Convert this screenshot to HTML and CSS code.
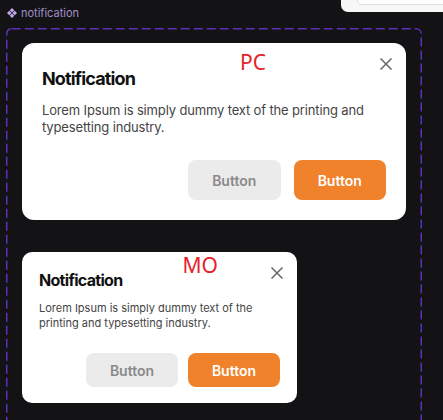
FILE: index.html
```html
<!DOCTYPE html>
<html lang="en">
<head>
<meta charset="utf-8">
<title>notification</title>
<link rel="stylesheet" href="styles.css">
</head>
<body>
<div class="side-panel"><div class="side-panel-inner"></div></div>
<div class="page">
  <div class="layer-label">
    <svg class="comp-icon" width="10" height="10" viewBox="0 0 10 10" aria-hidden="true">
      <path d="M5 0 L7.3 2.3 L5 4.6 L2.7 2.3 Z"/>
      <path d="M2.3 2.7 L4.6 5 L2.3 7.3 L0 5 Z"/>
      <path d="M7.7 2.7 L10 5 L7.7 7.3 L5.4 5 Z"/>
      <path d="M5 5.4 L7.3 7.7 L5 10 L2.7 7.7 Z"/>
    </svg>
    <span>notification</span>
  </div>
  <div class="frame">
    <svg class="frame-border" width="416" height="392" viewBox="0 0 416 392" aria-hidden="true">
      <rect x="0.75" y="0.75" width="414.5" height="440" rx="5" ry="5"/>
    </svg>

    <div class="card card-pc">
      <span class="tag tag-pc">PC</span>
      <button class="close close-pc" aria-label="Close">
        <svg width="12" height="12" viewBox="0 0 12 12"><path d="M0.5 0.5 L11.5 11.5 M11.5 0.5 L0.5 11.5"/></svg>
      </button>
      <h2 class="title">Notification</h2>
      <p class="text">Lorem Ipsum is simply dummy text of the printing and typesetting industry.</p>
      <div class="actions">
        <button class="btn btn-secondary">Button</button>
        <button class="btn btn-primary">Button</button>
      </div>
    </div>

    <div class="card card-mo">
      <span class="tag tag-mo">MO</span>
      <button class="close close-mo" aria-label="Close">
        <svg width="12" height="12" viewBox="0 0 12 12"><path d="M0.5 0.5 L11.5 11.5 M11.5 0.5 L0.5 11.5"/></svg>
      </button>
      <h2 class="title">Notification</h2>
      <p class="text">Lorem Ipsum is simply dummy text of the printing and typesetting industry.</p>
      <div class="actions">
        <button class="btn btn-secondary">Button</button>
        <button class="btn btn-primary">Button</button>
      </div>
    </div>
  </div>
</div>
</body>
</html>
```

FILE: styles.css
```css
* { box-sizing: border-box; }

html, body {
  margin: 0;
  padding: 0;
  width: 443px;
  height: 420px;
  overflow: hidden;
  background: #131315;
  font-family: Inter, "Noto Sans", sans-serif;
}

.side-panel {
  position: absolute;
  top: 0;
  right: 0;
  width: 102px;
  height: 12px;
  background: #f7f7f7;
  border-bottom-left-radius: 7px;
  overflow: hidden;
}

.side-panel-inner {
  position: absolute;
  top: -10px;
  left: 16px;
  right: -8px;
  height: 15px;
  background: #fff;
  border: 1px solid #dedede;
  border-radius: 5px;
}

.page {
  padding: 4px 0 0 6px;
}

.layer-label {
  display: flex;
  align-items: center;
  gap: 4px;
  height: 18px;
  padding-left: 1px;
  font-size: 11px;
  color: #a38dcb;
}

.comp-icon {
  display: block;
  fill: #c3a6ee;
}

.frame {
  position: relative;
  margin-top: 6px;
  width: 416px;
  height: 392px;
  padding: 15px 16px 0;
  display: flex;
  flex-direction: column;
  align-items: flex-start;
  gap: 32px;
  overflow: hidden;
}

.frame-border {
  position: absolute;
  top: 0;
  left: 0;
  pointer-events: none;
}

.frame-border rect {
  fill: none;
  stroke: #5f2eba;
  stroke-width: 1.5;
  stroke-dasharray: 9 4;
}

.card {
  position: relative;
  flex: none;
  background: #fff;
  display: flex;
  flex-direction: column;
}

.card-pc {
  width: 384px;
  padding: 25px 20px 20px;
  border-radius: 12px;
}

.card-mo {
  width: 275px;
  padding: 18px 17px 16px;
  border-radius: 10px;
}

.tag {
  position: absolute;
  font-family: "Noto Sans", "Noto Sans CJK KR", sans-serif;
  font-size: 21px;
  line-height: 21px;
  color: #e8212b;
}

.tag-pc { top: 9px; left: 218px; }
.tag-mo { top: 3px; left: 160.5px; }

.close {
  position: absolute;
  padding: 0;
  border: 0;
  background: none;
  width: 12px;
  height: 12px;
  line-height: 0;
}

.close svg path {
  fill: none;
  stroke: #666;
  stroke-width: 1.5;
}

.close-pc { top: 15px; right: 14px; }
.close-mo { top: 15px; right: 14px; }

.title {
  margin: 0;
  font-weight: 700;
  color: #111;
}

.card-pc .title { font-size: 18px; line-height: 22px; letter-spacing: -0.85px; }
.card-mo .title { font-size: 16px; line-height: 21px; letter-spacing: -0.7px; }

.text {
  margin: 0;
  color: #444;
}

.card-pc .text { font-size: 13px; line-height: 17px; margin-top: 12px; letter-spacing: -0.15px; }
.card-mo .text { font-size: 11px; line-height: 15px; margin-top: 10px; }

.actions {
  display: flex;
  justify-content: flex-end;
}

.card-pc .actions { gap: 13px; margin-top: 24px; }
.card-mo .actions { gap: 10px; margin-top: 22px; }

.btn {
  border: 0;
  padding: 0;
  width: 92.5px;
  border-radius: 8px;
  font-family: Inter, sans-serif;
  font-size: 14px;
  font-weight: 600;
}

.card-pc .btn { height: 40px; }
.card-mo .btn { height: 34px; width: 92px; }

.btn-secondary {
  background: #ebebeb;
  color: #8a8a8a;
}

.btn-primary {
  background: #f0822c;
  color: #fff;
}
```
